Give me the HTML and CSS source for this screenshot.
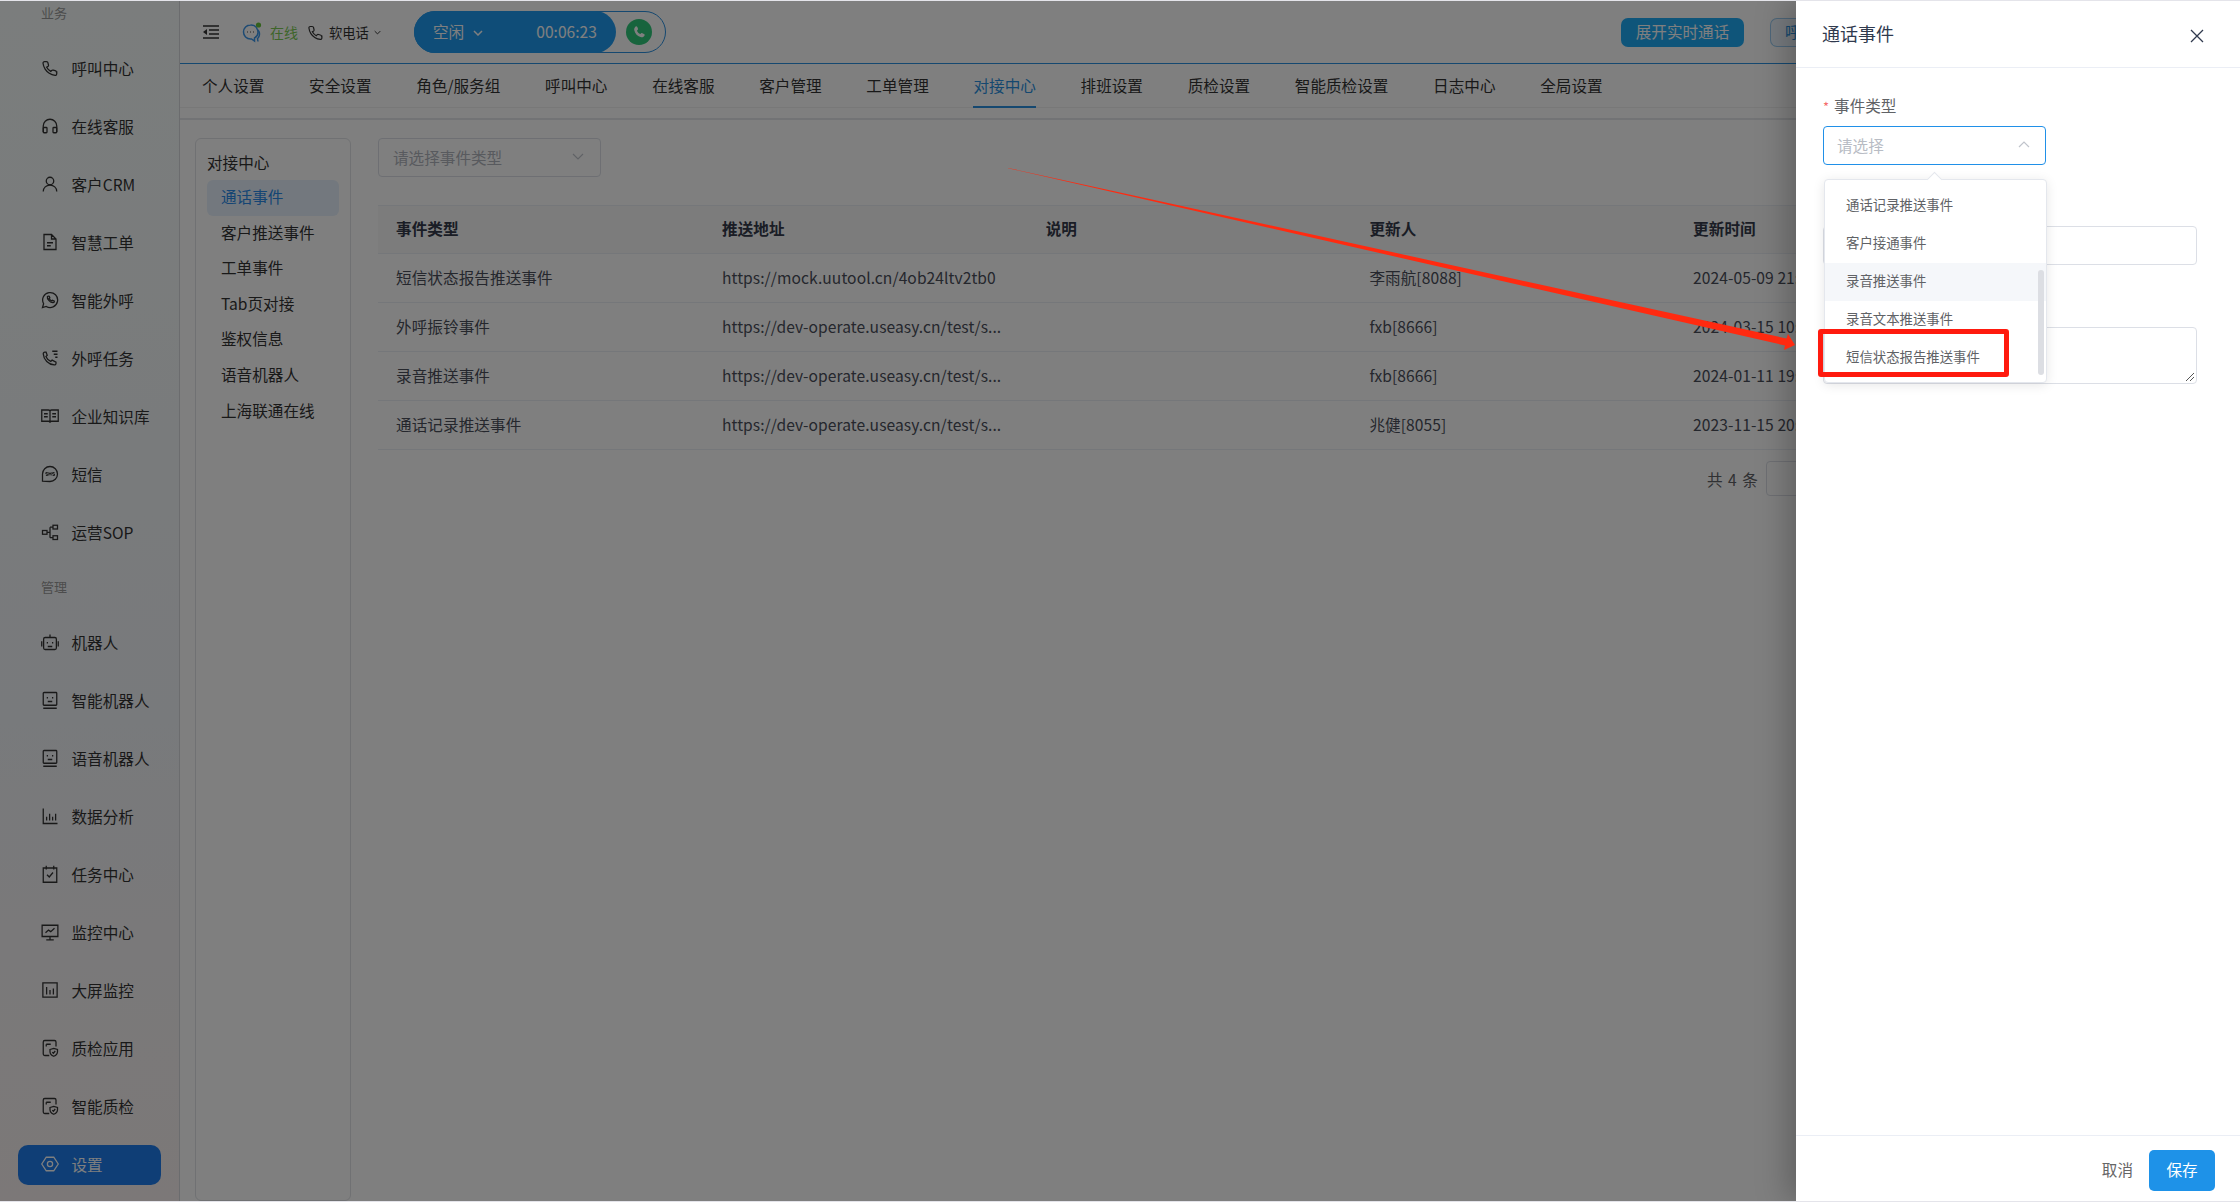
FILE: index.html
```html
<!DOCTYPE html>
<html lang="zh-CN">
<head>
  <meta charset="UTF-8">
  <title>通话事件</title>
  <link rel="stylesheet" href="styles.css">
</head>
<body>
  <svg class="defs" width="0" height="0">
    <symbol id="i-phone" viewBox="0 0 24 24"><path d="M21 17.2v2.6a2 2 0 0 1-2.2 2 18 18 0 0 1-7.800-2.800 17.700 17.700 0 0 1-5.500-5.500A18 18 0 0 1 2.700 5.700 2 2 0 0 1 4.700 3.500h2.600a2 2 0 0 1 2 1.700c.1.900.3 1.700.6 2.500a2 2 0 0 1-.4 2.100L7.500 11a14.500 14.500 0 0 0 5.500 5.500l1.200-1.200a2 2 0 0 1 2.100-.4c.8.300 1.600.5 2.500.6a2 2 0 0 1 1.700 1.700z"/></symbol>
    <symbol id="i-head" viewBox="0 0 24 24"><path d="M3 20v-8a9 9 0 0 1 18 0v8"/><rect x="3" y="14" width="5" height="7" rx="1"/><rect x="16" y="14" width="5" height="7" rx="1"/></symbol>
    <symbol id="i-user" viewBox="0 0 24 24"><circle cx="12" cy="8" r="5"/><path d="M3 22c0-5 4-8.500 9-8.500s9 3.500 9 8.500"/></symbol>
    <symbol id="i-doc" viewBox="0 0 24 24"><path d="M14 2H4v20h16V8zM14 2v6h6M8 13h8M8 17h5"/></symbol>
    <symbol id="i-wa" viewBox="0 0 24 24"><path d="M2 22l1.500-5A10 10 0 1 1 7 20.600z"/><path d="M8.500 7.500c-.8 3 4 8.500 7.800 8 1-.2 1.500-1 1.500-2l-2.500-1.200-1 1c-1.500-.5-2.800-1.800-3.500-3.300l1-1L11 7c-1-.3-2-.2-2.500.5z"/></symbol>
    <symbol id="i-task" viewBox="0 0 24 24"><path d="M15 3h7M17 7h5M19 11h3"/><path d="M20 17.500v1.800a2 2 0 0 1-2.200 2A16 16 0 0 1 3 6.500a2 2 0 0 1 2-2.200h1.800l1.500 4-1.800 1.800a12 12 0 0 0 6.500 6.500l1.800-1.800z"/></symbol>
    <symbol id="i-book" viewBox="0 0 24 24"><path d="M1 4h9a2 2 0 0 1 2 2v15a2 2 0 0 0-2-2H1zM23 4h-9a2 2 0 0 0-2 2v15a2 2 0 0 1 2-2h9zM4 9h5M4 13h5M15 9h5M15 13h5"/></symbol>
    <symbol id="i-sms" viewBox="0 0 24 24"><path d="M2 21.500V12a10 10 0 1 1 10 10z"/><path stroke-width="1.200" d="M9 10H6.500v2H9v2H6.500M10.500 14v-4l1.500 2.500 1.500-2.500v4M18 10h-2.500v2H18v2h-2.500"/></symbol>
    <symbol id="i-sop" viewBox="0 0 24 24"><rect x="2" y="10" width="6" height="5"/><rect x="16" y="3" width="6" height="5"/><rect x="16" y="17" width="6" height="5"/><path d="M8 12.500h4M12 5.500h4M12 19.500h4M12 5.500v14"/></symbol>
    <symbol id="i-bot" viewBox="0 0 24 24"><rect x="3.500" y="6" width="17" height="16" rx="2"/><path d="M12 2v4M8.500 12v2M15.500 12v2M9 18h6M1 11v7M23 11v7"/></symbol>
    <symbol id="i-face" viewBox="0 0 24 24"><rect x="3" y="2" width="18" height="17" rx="1"/><path d="M3 23h18M8.500 8v2M15.500 8v2M9 14h6"/></symbol>
    <symbol id="i-chart" viewBox="0 0 24 24"><path d="M3 2v20h19M7.500 13v5M11.500 9v9M15.500 13v5M19.500 9v9"/></symbol>
    <symbol id="i-cal" viewBox="0 0 24 24"><path d="M7 1v5M17 1v5M3 4h18v19H3zM8 13l3 3 5-6"/></symbol>
    <symbol id="i-mon" viewBox="0 0 24 24"><path d="M1.500 3h21v15h-21zM12 18v4M7 22.500h10M6 13l4-3.500 3 2 5-4.500"/></symbol>
    <symbol id="i-bars" viewBox="0 0 24 24"><rect x="2.500" y="2.500" width="19" height="19"/><path d="M7.500 8v10M12 12v6M16.500 10v8"/></symbol>
    <symbol id="i-qa" viewBox="0 0 24 24"><path d="M11 22H5a2 2 0 0 1-2-2V4a2 2 0 0 1 2-2h13a2 2 0 0 1 2 2v6M7 7h6M7 7v3"/><path d="M12 14l5-1.500 5 1.500v3c0 3-2.500 5-5 6-2.500-1-5-3-5-6zM15 17.500l1.500 1.500 2.500-3"/></symbol>
    <symbol id="i-gear" viewBox="0 0 24 24"><path d="M7 3h10l6 9-6 9H7l-6-9z"/><circle cx="12" cy="12" r="3.500"/></symbol>
  </svg>

  <div class="app">
    <aside class="sidebar">
      <div class="side-label side-label-first">业务</div>
      <a class="side-item"><svg class="ico"><use href="#i-phone"/></svg>呼叫中心</a>
      <a class="side-item"><svg class="ico"><use href="#i-head"/></svg>在线客服</a>
      <a class="side-item"><svg class="ico"><use href="#i-user"/></svg>客户CRM</a>
      <a class="side-item"><svg class="ico"><use href="#i-doc"/></svg>智慧工单</a>
      <a class="side-item"><svg class="ico"><use href="#i-wa"/></svg>智能外呼</a>
      <a class="side-item"><svg class="ico"><use href="#i-task"/></svg>外呼任务</a>
      <a class="side-item"><svg class="ico"><use href="#i-book"/></svg>企业知识库</a>
      <a class="side-item"><svg class="ico"><use href="#i-sms"/></svg>短信</a>
      <a class="side-item"><svg class="ico"><use href="#i-sop"/></svg>运营SOP</a>
      <div class="side-label">管理</div>
      <a class="side-item"><svg class="ico"><use href="#i-bot"/></svg>机器人</a>
      <a class="side-item"><svg class="ico"><use href="#i-face"/></svg>智能机器人</a>
      <a class="side-item"><svg class="ico"><use href="#i-face"/></svg>语音机器人</a>
      <a class="side-item"><svg class="ico"><use href="#i-chart"/></svg>数据分析</a>
      <a class="side-item"><svg class="ico"><use href="#i-cal"/></svg>任务中心</a>
      <a class="side-item"><svg class="ico"><use href="#i-mon"/></svg>监控中心</a>
      <a class="side-item"><svg class="ico"><use href="#i-bars"/></svg>大屏监控</a>
      <a class="side-item"><svg class="ico"><use href="#i-qa"/></svg>质检应用</a>
      <a class="side-item"><svg class="ico"><use href="#i-qa"/></svg>智能质检</a>
      <a class="side-item side-item-active"><svg class="ico"><use href="#i-gear"/></svg>设置</a>
    </aside>

    <main class="main">
      <header class="topbar">
        <svg class="menu-ico" viewBox="0 0 16 14"><path d="M0 1h16M6 5h10M6 9h10M0 13h16"/><path class="fill" d="M4 4v6L0 7z"/></svg>
        <span class="status">
          <svg class="chat-ico" viewBox="0 0 21 21">
            <path d="M9.500 3a7 7 0 1 0 0 14h1l3 2v-3a7 7 0 0 0-4-13z"/>
            <path d="M17 8a7 7 0 0 1 .5 7.500l-1 1 .5 3"/>
            <path class="dots" d="M6 10h1M9 10h1M12 10h1"/>
            <circle class="dot" cx="17.500" cy="3" r="2.600"/>
          </svg>
          <span class="status-text">在线</span>
        </span>
        <span class="softphone">
          <svg class="soft-ico"><use href="#i-phone"/></svg>软电话
          <svg class="caret" viewBox="0 0 10 6"><path d="M1 1l4 4 4-4"/></svg>
        </span>
        <div class="callbar">
          <div class="call-state">
            <span>空闲<svg class="caret-big" viewBox="0 0 10 6"><path d="M1 1l4 4 4-4"/></svg></span>
            <span>00:06:23</span>
          </div>
          <span class="call-btn"><svg viewBox="0 0 24 24"><path d="M7 3.500c1-.5 2 0 2.500 1l1 2.500c.2.700 0 1.300-.5 1.800L9 10c.8 2 2.500 3.900 5 5l1.300-1c.5-.4 1.100-.5 1.700-.3l2.500 1.200c1 .5 1.300 1.500.8 2.400-1 2-3 3-5 2.500-5.500-1.300-9.500-5.300-10.500-10.800-.3-2 .7-4 2.700-5.500z"/></svg></span>
        </div>
        <button class="btn-live">展开实时通话</button>
        <button class="btn-ghost">呼</button>
      </header>

      <nav class="tabs">
        <a>个人设置</a><a>安全设置</a><a>角色/服务组</a><a>呼叫中心</a><a>在线客服</a><a>客户管理</a><a>工单管理</a>
        <a class="tab-active">对接中心</a><a>排班设置</a><a>质检设置</a><a>智能质检设置</a><a>日志中心</a><a>全局设置</a>
      </nav>
      <div class="subbar"></div>

      <div class="content">
        <div class="panel">
          <div class="panel-title">对接中心</div>
          <a class="panel-item panel-item-active">通话事件</a>
          <a class="panel-item">客户推送事件</a>
          <a class="panel-item">工单事件</a>
          <a class="panel-item">Tab页对接</a>
          <a class="panel-item">鉴权信息</a>
          <a class="panel-item">语音机器人</a>
          <a class="panel-item">上海联通在线</a>
        </div>

        <section class="list">
          <div class="filter">
            请选择事件类型
            <svg class="chev" viewBox="0 0 12 7"><path d="M1 1l5 5 5-5"/></svg>
          </div>
          <div class="tbl">
            <div class="row row-head"><span>事件类型</span><span>推送地址</span><span>说明</span><span>更新人</span><span>更新时间</span></div>
            <div class="row"><span>短信状态报告推送事件</span><span>https://mock.uutool.cn/4ob24ltv2tb0</span><span></span><span>李雨航[8088]</span><span>2024-05-09 21:14:31</span></div>
            <div class="row"><span>外呼振铃事件</span><span>https://dev-operate.useasy.cn/test/s...</span><span></span><span>fxb[8666]</span><span>2024-03-15 10:22:08</span></div>
            <div class="row"><span>录音推送事件</span><span>https://dev-operate.useasy.cn/test/s...</span><span></span><span>fxb[8666]</span><span>2024-01-11 19:40:52</span></div>
            <div class="row"><span>通话记录推送事件</span><span>https://dev-operate.useasy.cn/test/s...</span><span></span><span>兆健[8055]</span><span>2023-11-15 20:05:17</span></div>
          </div>
          <div class="pager">
            <span class="pager-total">共 4 条</span>
            <span class="pager-box"></span>
          </div>
        </section>
      </div>
    </main>

    <div class="mask"></div>

    <aside class="drawer">
      <div class="drawer-head">
        <span>通话事件</span>
        <svg class="close" viewBox="0 0 14 14"><path d="M1 1l12 12M13 1L1 13"/></svg>
      </div>
      <div class="drawer-body">
        <label class="field-label"><i>*</i>事件类型</label>
        <div class="picker">
          请选择
          <svg class="chev-up" viewBox="0 0 12 7"><path d="M1 6l5-5 5 5"/></svg>
        </div>
        <div class="field-label field-gap"></div>
        <div class="input"></div>
        <div class="field-label field-gap"></div>
        <div class="textarea">
          <svg class="resize" viewBox="0 0 10 10"><path d="M1 9l8-8M5 9l4-4"/></svg>
        </div>

        <div class="dropdown">
          <span class="pop-tail"></span>
          <a>通话记录推送事件</a>
          <a>客户接通事件</a>
          <a class="hover">录音推送事件</a>
          <a>录音文本推送事件</a>
          <a>短信状态报告推送事件</a>
          <span class="scroll-thumb"></span>
        </div>
      </div>
      <div class="drawer-foot">
        <button class="btn-cancel">取消</button>
        <button class="btn-save">保存</button>
      </div>
    </aside>

    <!-- annotation drawn on top of the screenshot -->
    <span class="mark-box"></span>
    <svg class="mark-arrow" viewBox="0 0 2240 1202"><polygon points="1008,167.900 1786.500,338.500 1788,334 1795,345 1784,350 1785,345.500 1008,168.300"/></svg>
  </div>
</body>
</html>
```

FILE: styles.css
```css
html {
  box-sizing: border-box;
}
*, *::before, *::after {
  box-sizing: inherit;
}
body {
  margin: 0;
  background: #e4e4ea;
  font-family: "Noto Sans CJK SC", "Noto Sans", sans-serif;
  font-size: 15.6px;
  color: #333;
}
.defs {
  position: absolute;
}
.app {
  position: relative;
  display: flex;
  width: 2240px;
  height: 1200px;
  margin-top: 1px;
  overflow: hidden;
  background: #fff;
}

/* sidebar */
.sidebar {
  display: flex;
  flex-direction: column;
  flex: 0 0 180px;
  border-right: 1px solid #d6d9dd;
  background: linear-gradient(180deg, #f6fbfa 0%, #f1f4f8 60%, #f8f1f0 100%);
  overflow: hidden;
}
.side-label {
  flex-shrink: 0;
  height: 52px;
  line-height: 50px;
  padding-left: 41px;
  font-size: 13px;
  color: #999;
}
.side-label-first {
  margin-top: -13px;
}
.side-item {
  display: flex;
  align-items: center;
  flex-shrink: 0;
  gap: 12.5px;
  height: 40px;
  margin: 9px 18px;
  padding: 0 0 2px 23px;
  border-radius: 10px;
  color: #333;
}
.side-item-active {
  background: #1e7cec;
  color: #fff;
}
.ico {
  width: 18px;
  height: 18px;
  fill: none;
  stroke: currentColor;
  stroke-width: 1.7;
}

/* top bar */
.main {
  flex: 1;
  display: flex;
  flex-direction: column;
  min-width: 0;
}
.topbar {
  display: flex;
  align-items: center;
  height: 63px;
  padding-left: 23px;
  border-bottom: 1px solid #2a90e0;
}
.menu-ico {
  width: 16px;
  height: 14px;
  fill: none;
  stroke: #333;
  stroke-width: 1.5;
}
.menu-ico .fill {
  fill: #333;
  stroke: none;
}
.status {
  display: flex;
  align-items: center;
  gap: 8px;
  margin-left: 22px;
}
.chat-ico {
  width: 21px;
  height: 21px;
  fill: none;
  stroke: #3c96e8;
  stroke-width: 1.5;
}
.chat-ico .dots {
  stroke: #888;
}
.chat-ico .dot {
  fill: #67c23a;
  stroke: none;
}
.status-text {
  font-size: 14px;
  color: #7ccb55;
}
.softphone {
  display: flex;
  align-items: center;
  margin-left: 9px;
  font-size: 13.3px;
  color: #333;
}
.soft-ico {
  width: 17px;
  height: 17px;
  margin-right: 5px;
  fill: none;
  stroke: #333;
  stroke-width: 1.7;
}
.caret {
  width: 7px;
  height: 5px;
  margin-left: 5px;
  fill: none;
  stroke: #333;
  stroke-width: 1.4;
}
.callbar {
  display: flex;
  align-items: center;
  width: 252px;
  height: 42px;
  margin-left: 33px;
  border: 1px solid #2a90e0;
  border-radius: 21px;
  background: #fff;
}
.call-state {
  display: flex;
  align-items: center;
  justify-content: space-between;
  flex: 0 0 202px;
  height: 42px;
  margin: -1px 0 -1px -1px;
  padding: 0 19px 2px 19px;
  border-radius: 21px;
  background: #1e9bf0;
  color: #fff;
  font-size: 15.6px;
}
.caret-big {
  width: 10px;
  height: 6px;
  margin-left: 9px;
  vertical-align: 2px;
  fill: none;
  stroke: #fff;
  stroke-width: 1.5;
}
.call-btn {
  display: flex;
  align-items: center;
  justify-content: center;
  width: 26px;
  height: 26px;
  margin-left: 10px;
  border-radius: 50%;
  background: #2ec97a;
}
.call-btn svg {
  width: 16px;
  height: 16px;
  fill: #fff;
}
.btn-live, .btn-ghost {
  height: 29px;
  padding: 0;
  border-radius: 7px;
  font-family: inherit;
  font-size: 15.6px;
}
.btn-live {
  width: 123px;
  margin-left: auto;
  padding-bottom: 2px;
  border: none;
  background: #1eaaf5;
  color: #fff;
}
.btn-ghost {
  width: 26px;
  margin: 0 444px 0 26px;
  padding: 0 0 2px 14px;
  overflow: hidden;
  text-align: left;
  white-space: nowrap;
  border: 1px solid #9ccdf2;
  border-right: none;
  border-radius: 7px 0 0 7px;
  background: #eef7fe;
  color: #2a90e0;
}

/* tabs */
.tabs {
  display: flex;
  align-items: center;
  gap: 44.72px;
  height: 44px;
  padding-left: 22px;
  border-bottom: 1px solid #f0f0f0;
}
.tabs a {
  height: 44px;
  line-height: 42px;
  white-space: nowrap;
}
.tab-active {
  border-bottom: 2px solid #2a90e0;
  color: #2a90e0;
}
.subbar {
  height: 12px;
  border-bottom: 2px solid #e4e6ea;
}

/* left panel */
.content {
  flex: 1;
  display: flex;
  min-height: 0;
  padding: 18px 0 0 15px;
}
.panel {
  flex: 0 0 156px;
  padding: 13px 11px 0;
  border: 1px solid #e0e2e6;
  border-radius: 6px;
}
.panel-title {
  height: 24px;
  line-height: 20px;
  margin-bottom: 4px;
}
.panel-item {
  display: block;
  height: 35.6px;
  line-height: 33.6px;
  padding-left: 14px;
  border-radius: 6px;
  white-space: nowrap;
}
.panel-item-active {
  background: #e6f1fd;
  color: #2a8ae8;
}

/* list */
.list {
  flex: 1;
  margin-left: 27px;
  min-width: 0;
}
.filter {
  display: flex;
  align-items: center;
  justify-content: space-between;
  width: 223px;
  height: 39px;
  padding: 0 16px 2px 14px;
  border: 1px solid #dcdfe6;
  border-radius: 4px;
  color: #b0b4bc;
}
.chev, .chev-up {
  width: 12px;
  height: 7px;
  fill: none;
  stroke: #c0c4cc;
  stroke-width: 1.2;
}
.tbl {
  margin-top: 28px;
  border-top: 1px solid #ebeef5;
}
.row {
  display: grid;
  grid-template-columns: 326px repeat(4, 323.7px);
  align-items: center;
  height: 49px;
  padding-bottom: 2px;
  border-bottom: 1px solid #ebeef5;
  color: #4a4e5a;
}
.row span {
  padding-left: 18px;
  letter-spacing: 0.07px;
  white-space: nowrap;
}
.row-head {
  height: 48px;
  padding-bottom: 4px;
  background: #f8f8f9;
  color: #343a4a;
  font-weight: 700;
}
.pager {
  display: flex;
  align-items: center;
  gap: 8px;
  height: 35px;
  margin: 11px 0 0 1329px;
  color: #606266;
}
.pager-total {
  word-spacing: 2px;
}
.pager-box {
  width: 110px;
  height: 35px;
  border: 1px solid #dcdfe6;
  border-radius: 4px;
}

/* overlay */
.mask {
  position: absolute;
  inset: 0;
  background: rgba(0, 0, 0, 0.5);
}
.drawer {
  position: absolute;
  top: 0;
  right: 0;
  bottom: 0;
  display: flex;
  flex-direction: column;
  width: 444px;
  background: #fff;
  box-shadow: -8px 0 30px rgba(0, 0, 0, 0.25);
}
.drawer-head {
  display: flex;
  align-items: center;
  justify-content: space-between;
  flex: 0 0 67px;
  padding: 0 36px 2px 26px;
  border-bottom: 1px solid #ebeef5;
  font-size: 18px;
  color: #303a4e;
}
.close {
  width: 14px;
  height: 14px;
  margin-top: 6px;
  fill: none;
  stroke: #303a4e;
  stroke-width: 1.3;
}
.drawer-body {
  position: relative;
  flex: 1;
  padding: 26px 43px 0 27px;
}
.field-label {
  display: block;
  height: 24px;
  line-height: 22px;
  margin-bottom: 8px;
  color: #606266;
}
.field-label i {
  margin-right: 5px;
  font-style: normal;
  font-size: 13px;
  color: #f56c6c;
}
.field-gap {
  margin-top: 29px;
}
.picker {
  display: flex;
  align-items: center;
  justify-content: space-between;
  width: 223px;
  height: 39px;
  padding: 0 15px 2px 13px;
  border: 1px solid #2090e8;
  border-radius: 4px;
  color: #b8bcc4;
}
.input {
  height: 39px;
  margin-bottom: 30px;
  border: 1px solid #dcdfe6;
  border-radius: 4px;
}
.textarea {
  position: relative;
  height: 57px;
  border: 1px solid #dcdfe6;
  border-radius: 4px;
}
.resize {
  position: absolute;
  right: 1px;
  bottom: 1px;
  width: 10px;
  height: 10px;
  fill: none;
  stroke: #555;
  stroke-width: 1;
}

/* select popup */
.dropdown {
  position: absolute;
  top: 111px;
  left: 28px;
  width: 223px;
  height: 204px;
  padding-top: 7.400px;
  background: #fff;
  border: 1px solid #e4e7ed;
  border-radius: 4px;
  box-shadow: 0 2px 12px rgba(0, 0, 0, 0.1);
}
.dropdown a {
  display: block;
  height: 37.800px;
  line-height: 35.400px;
  padding-left: 21px;
  font-size: 13.4px;
  color: #606266;
  white-space: nowrap;
}
.dropdown .hover {
  background: #f5f7fa;
}
.pop-tail {
  position: absolute;
  top: -6px;
  left: 104px;
  width: 11px;
  height: 11px;
  background: #fff;
  border-top: 1px solid #e4e7ed;
  border-left: 1px solid #e4e7ed;
  transform: rotate(45deg);
}
.scroll-thumb {
  position: absolute;
  top: 90px;
  right: 2px;
  width: 6px;
  height: 105px;
  border-radius: 3px;
  background: #dcdee3;
}

.drawer-foot {
  display: flex;
  align-items: center;
  justify-content: flex-end;
  gap: 16px;
  flex: 0 0 66px;
  padding: 3px 25px 0 0;
  border-top: 1px solid #ebeef5;
}
.btn-cancel {
  padding: 0 0 2px;
  border: none;
  background: none;
  font-family: inherit;
  font-size: 15.6px;
  color: #666;
}
.btn-save {
  width: 66px;
  height: 41px;
  padding: 0 0 2px;
  border: none;
  border-radius: 5px;
  background: #1e92e8;
  color: #fff;
  font-family: inherit;
  font-size: 15.6px;
}

/* annotation */
.mark-box {
  position: absolute;
  top: 328px;
  left: 1818px;
  width: 191px;
  height: 48px;
  border: 5px solid #ff1a0e;
  border-radius: 3px;
}
.mark-arrow {
  position: absolute;
  top: -1px;
  left: 0;
  width: 2240px;
  height: 1202px;
  pointer-events: none;
}
.mark-arrow polygon {
  fill: #ff2a10;
}
```
